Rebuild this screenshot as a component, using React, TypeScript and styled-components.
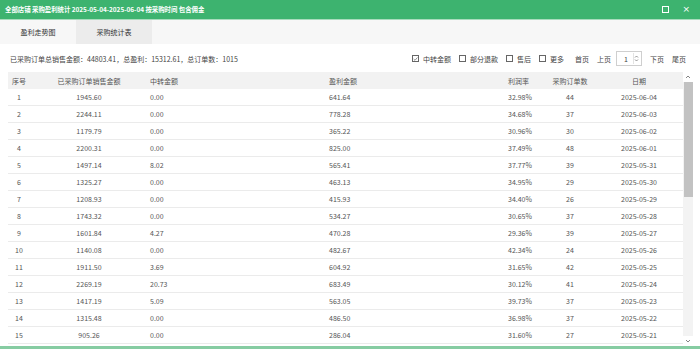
import React from "react";
import styled, { createGlobalStyle } from "styled-components";

const GlobalStyle = createGlobalStyle`
  html, body {
    margin: 0;
    padding: 0;
    background: #ffffff;
  }
  body {
    font-family: "Noto Sans CJK SC", "Noto Sans", sans-serif;
    color: #555555;
  }
`;

type Row = [string, string, string, string, string, string, string];

const rows: Row[] = [
  ["1", "1945.60", "0.00", "641.64", "32.98%", "44", "2025-06-04"],
  ["2", "2244.11", "0.00", "778.28", "34.68%", "37", "2025-06-03"],
  ["3", "1179.79", "0.00", "365.22", "30.96%", "30", "2025-06-02"],
  ["4", "2200.31", "0.00", "825.00", "37.49%", "48", "2025-06-01"],
  ["5", "1497.14", "8.02", "565.41", "37.77%", "39", "2025-05-31"],
  ["6", "1325.27", "0.00", "463.13", "34.95%", "29", "2025-05-30"],
  ["7", "1208.93", "0.00", "415.93", "34.40%", "26", "2025-05-29"],
  ["8", "1743.32", "0.00", "534.27", "30.65%", "37", "2025-05-28"],
  ["9", "1601.84", "4.27", "470.28", "29.36%", "39", "2025-05-27"],
  ["10", "1140.08", "0.00", "482.67", "42.34%", "24", "2025-05-26"],
  ["11", "1911.50", "3.69", "604.92", "31.65%", "42", "2025-05-25"],
  ["12", "2269.19", "20.73", "683.49", "30.12%", "41", "2025-05-24"],
  ["13", "1417.19", "5.09", "563.05", "39.73%", "37", "2025-05-23"],
  ["14", "1315.48", "0.00", "486.50", "36.98%", "37", "2025-05-22"],
  ["15", "905.26", "0.00", "286.04", "31.60%", "27", "2025-05-21"],
];

const headers = ["序号", "已采购订单销售金额", "中转金额", "盈利金额", "利润率", "采购订单数", "日期"];
const aligns: Array<"center" | "left"> = ["center", "center", "left", "left", "left", "center", "center"];

const Window = styled.div`
  width: 700px;
  height: 349px;
  display: flex;
  flex-direction: column;
  overflow: hidden;
  background: #ffffff;
  border-bottom: 3px solid #86cca2;
  box-sizing: border-box;
`;

const TitleBar = styled.div`
  height: 20px;
  flex: none;
  box-sizing: border-box;
  background: #3db36f;
  border-bottom: 1px solid #a9dcbd;
  display: flex;
  align-items: center;
  padding: 0 6px 0 5px;
  color: #ffffff;
  font-size: 6.4px;
  font-weight: bold;
`;

const Title = styled.div`
  flex: 1;
  white-space: nowrap;
`;

const WinButtons = styled.div`
  display: flex;
  align-items: center;
  gap: 13px;
  padding-right: 4px;
`;

const MaxIcon = styled.span`
  width: 5px;
  height: 5px;
  border: 1px solid #ffffff;
  box-sizing: content-box;
`;

const CloseIcon = styled.span`
  font-size: 9px;
  font-weight: normal;
  line-height: 1;
  font-family: "DejaVu Sans", sans-serif;
`;

const TabBar = styled.div`
  height: 24px;
  flex: none;
  display: flex;
  background: #f7f7f7;
`;

const Tab = styled.div<{ $active?: boolean }>`
  width: 76px;
  display: flex;
  align-items: center;
  justify-content: center;
  font-size: 7px;
  color: #333333;
  background: ${(p) => (p.$active ? "#ececec" : "transparent")};
`;

const Toolbar = styled.div`
  height: 28px;
  flex: none;
  display: flex;
  align-items: center;
  padding: 1px 14px 0 10px;
  box-sizing: border-box;
  font-size: 7px;
  color: #444444;
`;

const Summary = styled.div`
  flex: 1;
  white-space: nowrap;
`;

const Controls = styled.div`
  display: flex;
  align-items: center;
`;

const CheckLabel = styled.label`
  display: flex;
  align-items: center;
  gap: 4px;
  margin-right: 8px;
`;

const Box = styled.span`
  width: 7px;
  height: 7px;
  border: 1px solid #666666;
  box-sizing: border-box;
  display: flex;
  align-items: center;
  justify-content: center;
  background: #ffffff;
`;

const PageLink = styled.span<{ $gap?: number }>`
  margin-left: ${(p) => p.$gap ?? 8}px;
`;

const PageInput = styled.div`
  margin-left: 5px;
  width: 26px;
  height: 15px;
  box-sizing: border-box;
  border: 1px solid #cfcfcf;
  display: flex;
  align-items: center;
  padding-left: 7px;
  justify-content: space-between;
`;

const Spinner = styled.div`
  width: 6px;
  height: 11px;
  margin-right: 1px;
  display: flex;
  flex-direction: column;
  justify-content: center;
  border-left: 1px solid #e3e3e3;
`;

const Body = styled.div`
  flex: 1;
  display: flex;
  padding: 0 0 0 8px;
  min-height: 0;
`;

const Table = styled.div`
  width: 675px;
  display: flex;
  flex-direction: column;
  overflow: hidden;
`;

const GridRow = styled.div<{ $head?: boolean }>`
  display: grid;
  grid-template-columns: 22px 118px 179px 179px 39px 50px 1fr;
  height: 17px;
  flex: none;
  align-items: center;
  font-size: 7px;
  color: #555555;
  background: ${(p) => (p.$head ? "#f2f2f2" : "#ffffff")};
  border-bottom: ${(p) => (p.$head ? "none" : "1px solid #ebebeb")};
  box-sizing: border-box;
`;

const Cell = styled.div<{ $align: "center" | "left" }>`
  text-align: ${(p) => p.$align};
  padding-left: ${(p) => (p.$align === "left" ? "2px" : "0")};
  white-space: nowrap;
`;

const ScrollBar = styled.div`
  width: 10px;
  display: flex;
  flex-direction: column;
  align-items: center;
  background: #f3f3f3;
`;

const Arrow = styled.div`
  height: 10px;
  flex: none;
  display: flex;
  align-items: center;
  justify-content: center;
  background: #ffffff;
  width: 100%;
`;

const Thumb = styled.div`
  width: 9px;
  height: 115px;
  background: #c2c2c2;
  flex: none;
`;

const Track = styled.div`
  flex: 1;
`;

function Check({ checked, label }: { checked?: boolean; label: string }) {
  return (
    <CheckLabel>
      <Box>
        {checked && (
          <svg width="6" height="6" viewBox="0 0 6 6">
            <path d="M0.8 3.1 L2.4 4.6 L5.3 1.2" fill="none" stroke="#555" strokeWidth="0.8" />
          </svg>
        )}
      </Box>
      {label}
    </CheckLabel>
  );
}

function Chevron({ up }: { up?: boolean }) {
  return (
    <svg width="6" height="4" viewBox="0 0 6 4">
      <path d={up ? "M1 3 L3 1 L5 3" : "M1 1 L3 3 L5 1"} fill="none" stroke="#777" strokeWidth="0.9" />
    </svg>
  );
}

export default function App() {
  return (
    <>
      <GlobalStyle />
      <Window>
        <TitleBar>
          <Title>全部店铺 采购盈利统计 2025-05-04-2025-06-04 按采购时间 包含佣金</Title>
          <WinButtons>
            <MaxIcon />
            <CloseIcon>×</CloseIcon>
          </WinButtons>
        </TitleBar>
        <TabBar>
          <Tab>盈利走势图</Tab>
          <Tab $active>采购统计表</Tab>
        </TabBar>
        <Toolbar>
          <Summary>已采购订单总销售金额：44803.41，总盈利：15312.61，总订单数：1015</Summary>
          <Controls>
            <Check checked label="中转金额" />
            <Check label="部分退款" />
            <Check label="售后" />
            <Check label="更多" />
            <PageLink $gap={3}>首页</PageLink>
            <PageLink>上页</PageLink>
            <PageInput>
              1
              <Spinner>
                <svg width="5" height="9" viewBox="0 0 5 9">
                  <path d="M1 3.5 L2.5 2 L4 3.5" fill="none" stroke="#777" strokeWidth="0.8" />
                  <path d="M1 5.5 L2.5 7 L4 5.5" fill="none" stroke="#777" strokeWidth="0.8" />
                </svg>
              </Spinner>
            </PageInput>
            <PageLink>下页</PageLink>
            <PageLink>尾页</PageLink>
          </Controls>
        </Toolbar>
        <Body>
          <Table>
            <GridRow $head>
              {headers.map((h, i) => (
                <Cell key={h} $align={aligns[i]}>
                  {h}
                </Cell>
              ))}
            </GridRow>
            {rows.map((r) => (
              <GridRow key={r[0]}>
                {r.map((v, i) => (
                  <Cell key={i} $align={aligns[i]}>
                    {v}
                  </Cell>
                ))}
              </GridRow>
            ))}
          </Table>
          <ScrollBar>
            <Arrow>
              <Chevron up />
            </Arrow>
            <Thumb />
            <Track />
            <Arrow>
              <Chevron />
            </Arrow>
          </ScrollBar>
        </Body>
      </Window>
    </>
  );
}
